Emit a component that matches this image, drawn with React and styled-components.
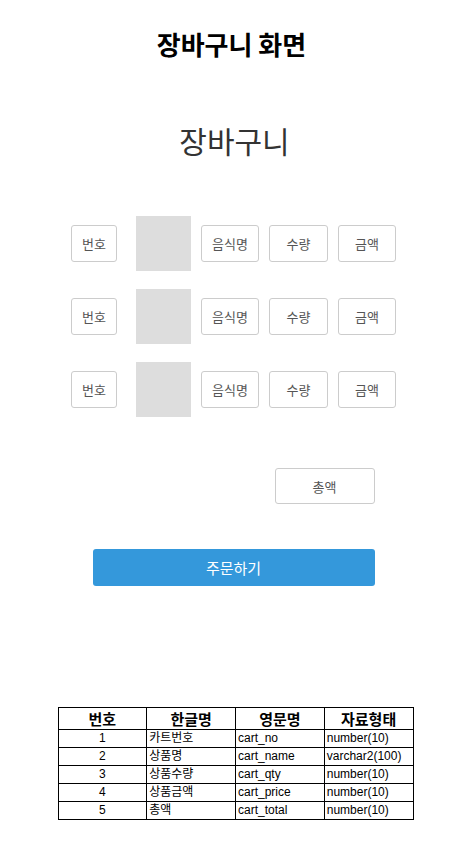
import React from "react";
import styled, { createGlobalStyle } from "styled-components";

const GlobalStyle = createGlobalStyle`
  body {
    margin: 0;
    background: #fff;
    font-family: "Noto Sans CJK KR", "Noto Sans", sans-serif;
  }
`;

const Page = styled.div`
  width: 469px;
  display: flex;
  flex-direction: column;
  align-items: center;
`;

const Title = styled.h2`
  margin: 26px 0 0 -6px;
  font-size: 26px;
  font-weight: 700;
  color: #000;
  line-height: 36px;
`;

const CartTitle = styled.h1`
  margin: 57px 0 0 0;
  font-size: 30px;
  font-weight: 400;
  color: #333;
  line-height: 43px;
`;

const Rows = styled.div`
  margin-top: 54px;
  display: flex;
  flex-direction: column;
  gap: 18px;
  margin-left: -2px;
`;

const Row = styled.div`
  display: flex;
  align-items: center;
`;

const Cell = styled.div`
  width: ${(p) => p.w}px;
  height: 35px;
  margin-left: ${(p) => p.gap || 0}px;
  border: 1px solid #ccc;
  border-radius: 3px;
  display: flex;
  align-items: center;
  justify-content: center;
  font-size: 13px;
  color: #555;
  box-sizing: content-box;
`;

const Thumb = styled.div`
  width: 55px;
  height: 55px;
  margin-left: 19px;
  background: #ddd;
`;

const TotalRow = styled.div`
  width: 282px;
  margin-top: 51px;
  margin-left: -2px;
  display: flex;
  justify-content: flex-end;
`;

const TotalBox = styled.div`
  width: 98px;
  height: 34px;
  border: 1px solid #ccc;
  border-radius: 3px;
  display: flex;
  align-items: center;
  justify-content: center;
  font-size: 13px;
  color: #555;
`;

const OrderButton = styled.button`
  margin-top: 45px;
  margin-left: -2px;
  width: 282px;
  height: 37px;
  border: none;
  border-radius: 3px;
  background: #3498db;
  color: #fff;
  font-family: "Noto Sans CJK KR", sans-serif;
  font-size: 15px;
`;

const Table = styled.table`
  margin-top: 121px;
  margin-left: 2px;
  width: 356px;
  border-collapse: collapse;
  table-layout: fixed;
  font-family: "Liberation Sans", "Noto Sans CJK KR", sans-serif;
  font-size: 12px;
  color: #000;
  th,
  td {
    border: 1px solid #000;
    padding: 0 2px;
    height: 17px;
    line-height: 17px;
  }
  th {
    height: 21px;
    font-size: 15px;
    font-weight: 700;
    font-family: "Noto Sans CJK KR", sans-serif;
  }
  td:first-child {
    text-align: center;
  }
`;

const fields = [
  ["1", "카트번호", "cart_no", "number(10)"],
  ["2", "상품명", "cart_name", "varchar2(100)"],
  ["3", "상품수량", "cart_qty", "number(10)"],
  ["4", "상품금액", "cart_price", "number(10)"],
  ["5", "총액", "cart_total", "number(10)"],
];

const App = () => {
  return (
    <>
      <GlobalStyle />
      <Page>
        <Title>장바구니 화면</Title>
        <CartTitle>장바구니</CartTitle>
        <Rows>
          {[0, 1, 2].map((i) => (
            <Row key={i}>
              <Cell w={44}>번호</Cell>
              <Thumb />
              <Cell w={56} gap={10}>음식명</Cell>
              <Cell w={57} gap={10}>수량</Cell>
              <Cell w={56} gap={10}>금액</Cell>
            </Row>
          ))}
        </Rows>
        <TotalRow>
          <TotalBox>총액</TotalBox>
        </TotalRow>
        <OrderButton>주문하기</OrderButton>
        <Table>
          <thead>
            <tr>
              <th>번호</th>
              <th>한글명</th>
              <th>영문명</th>
              <th>자료형태</th>
            </tr>
          </thead>
          <tbody>
            {fields.map((f) => (
              <tr key={f[0]}>
                {f.map((v, j) => (
                  <td key={j}>{v}</td>
                ))}
              </tr>
            ))}
          </tbody>
        </Table>
      </Page>
    </>
  );
};

export default App;
